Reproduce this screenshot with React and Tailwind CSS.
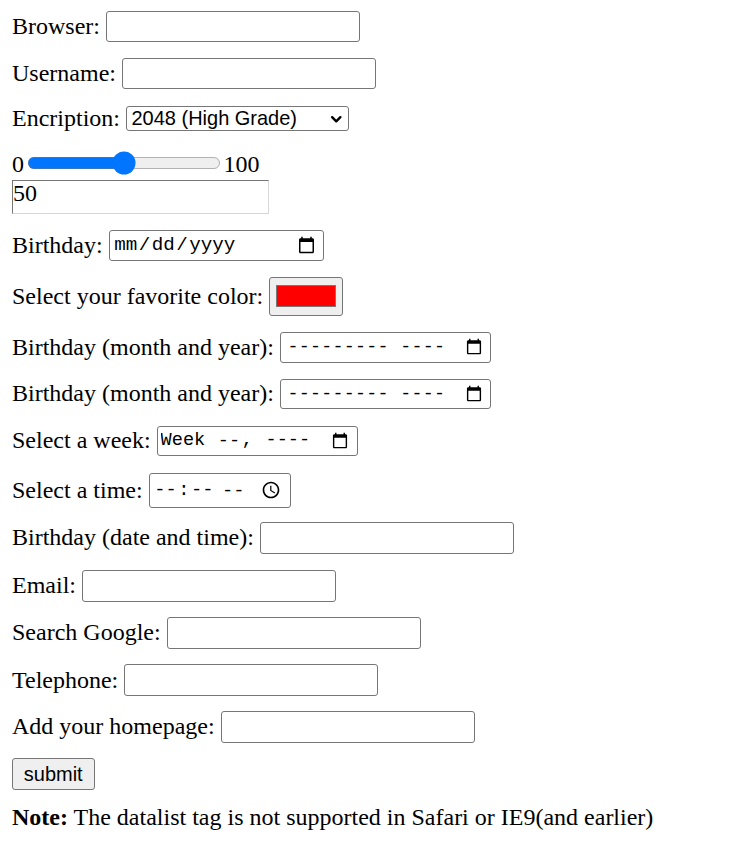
import { ChevronDown } from "lucide-react";

// the whole form is written at 1x browser defaults and scaled up like the reference (150%)
const field =
  "h-[21px] w-[169.33px] rounded-[2px] border border-[#767676] bg-white px-[2px] text-[13.333px] font-['Liberation_Sans',Arial,sans-serif] text-black";
const dateField =
  "rounded-[2px] border border-[#767676] bg-white pl-[2px] pr-[3px] font-['Liberation_Mono','DejaVu_Sans_Mono',monospace] text-black";

function Row({ className, label, children }) {
  return (
    <div className={"flex items-center gap-[4px] " + className}>
      <span className="whitespace-nowrap">{label}</span>
      {children}
    </div>
  );
}

// month input: keep the native picker button, show the en-US empty placeholder
function MonthField({ name }) {
  return (
    <div className="relative flex">
      <input
        type="month"
        name={name}
        className={"h-[20.4px] w-[141px] text-[12.2px] [&::-webkit-datetime-edit]:opacity-0 " + dateField}
      />
      <span className="pointer-events-none absolute left-[5px] top-0 flex h-full items-center whitespace-pre font-['Liberation_Mono','DejaVu_Sans_Mono',monospace] text-[12.2px] tracking-[0.2px] text-black">
        {"--------- ----"}
      </span>
    </div>
  );
}

export default function App() {
  return (
    <div className="bg-white text-black [zoom:1.5]">
      <form className="flex flex-col items-start px-2 font-['Liberation_Serif','Times_New_Roman',serif] text-[16px] leading-[normal]">
        <Row className="mt-[7.33px]" label="Browser:">
          <input list="browsers" name="browser" className={field} />
          <datalist id="browsers">
            <option value="Internet Explorer" />
            <option value="Firefox" />
            <option value="Chrome" />
            <option value="Opera" />
            <option value="Safari" />
          </datalist>
        </Row>

        <Row className="mt-[10.33px]" label="Username:">
          <input type="text" name="usrname" className={field} />
        </Row>

        <Row className="mt-[10.4px]" label="Encription:">
          <div className="relative flex">
            <select
              name="security"
              defaultValue="high"
              className="h-[16.67px] w-[149px] appearance-none rounded-[2px] border border-[#767676] bg-white pl-[3px] text-[13.333px] leading-[14px] font-['Liberation_Sans',Arial,sans-serif] text-black"
            >
              <option value="high">2048 (High Grade)</option>
              <option value="medium">1024 (Medium Grade)</option>
            </select>
            <ChevronDown
              strokeWidth={3.5}
              className="pointer-events-none absolute right-[3px] top-[3px] h-[11px] w-[11px] text-black"
            />
          </div>
        </Row>

        <div className="mt-[12.5px] flex h-[18.4px] items-start">
          <span>0</span>
          <input type="range" name="points" min="0" max="100" defaultValue={50} className="mx-[2px] h-[16px] w-[129px]" />
          <span>100</span>
        </div>

        <div className="mt-[1.27px] h-[22.2px] w-[171px] border border-t-[#767676] border-l-[#767676] border-r-[#d6d6d6] border-b-[#d6d6d6] leading-[16px]">
          50
        </div>

        <Row className="mt-[10.7px]" label="Birthday:">
          <input type="date" name="bday" className={"h-[20.9px] w-[143.8px] text-[12.8px] " + dateField} />
        </Row>

        <Row className="mt-[10.6px]" label="Select your favorite color:">
          <input
            type="color"
            name="favcolor"
            defaultValue="#ff0000"
            className="h-[26px] w-[49.4px] rounded-[2px] border border-[#767676] bg-[#efefef] px-[2px] py-[1px]"
          />
        </Row>

        <Row className="mt-[10.7px]" label="Birthday (month and year):">
          <MonthField name="bdaymonth" />
        </Row>

        <Row className="mt-[10.7px]" label="Birthday (month and year):">
          <MonthField name="bdaymonth2" />
        </Row>

        <Row className="mt-[10.9px]" label="Select a week:">
          <input type="week" name="week_year" className={"h-[20.5px] w-[134px] text-[12.4px] " + dateField} />
        </Row>

        <Row className="mt-[10.9px]" label="Select a time:">
          <input type="time" name="usr_time" className={"h-[23.3px] w-[95px] text-[12.5px] " + dateField} />
        </Row>

        <Row className="mt-[9.8px]" label="Birthday (date and time):">
          <input type="text" name="bdaytime" className={field} />
        </Row>

        <Row className="mt-[11px]" label="Email:">
          <input type="email" name="email" className={field} />
        </Row>

        <Row className="mt-[10.3px]" label="Search Google:">
          <input type="search" name="googlesearch" className={field} />
        </Row>

        <Row className="mt-[10.4px]" label="Telephone:">
          <input type="tel" name="usrtel" className={field} />
        </Row>

        <Row className="mt-[10.3px]" label="Add your homepage:">
          <input type="url" name="homepage" className={field} />
        </Row>

        <button
          type="submit"
          className="mt-[10.5px] h-[21px] w-[55px] rounded-[2px] border border-[#767676] bg-[#efefef] px-[6px] text-[13.333px] font-['Liberation_Sans',Arial,sans-serif] text-black"
        >
          submit
        </button>

        <p className="mt-[9.5px] whitespace-nowrap">
          <b className="font-bold">Note:</b> The datalist tag is not supported in Safari or IE9(and earlier)
        </p>
      </form>
    </div>
  );
}
